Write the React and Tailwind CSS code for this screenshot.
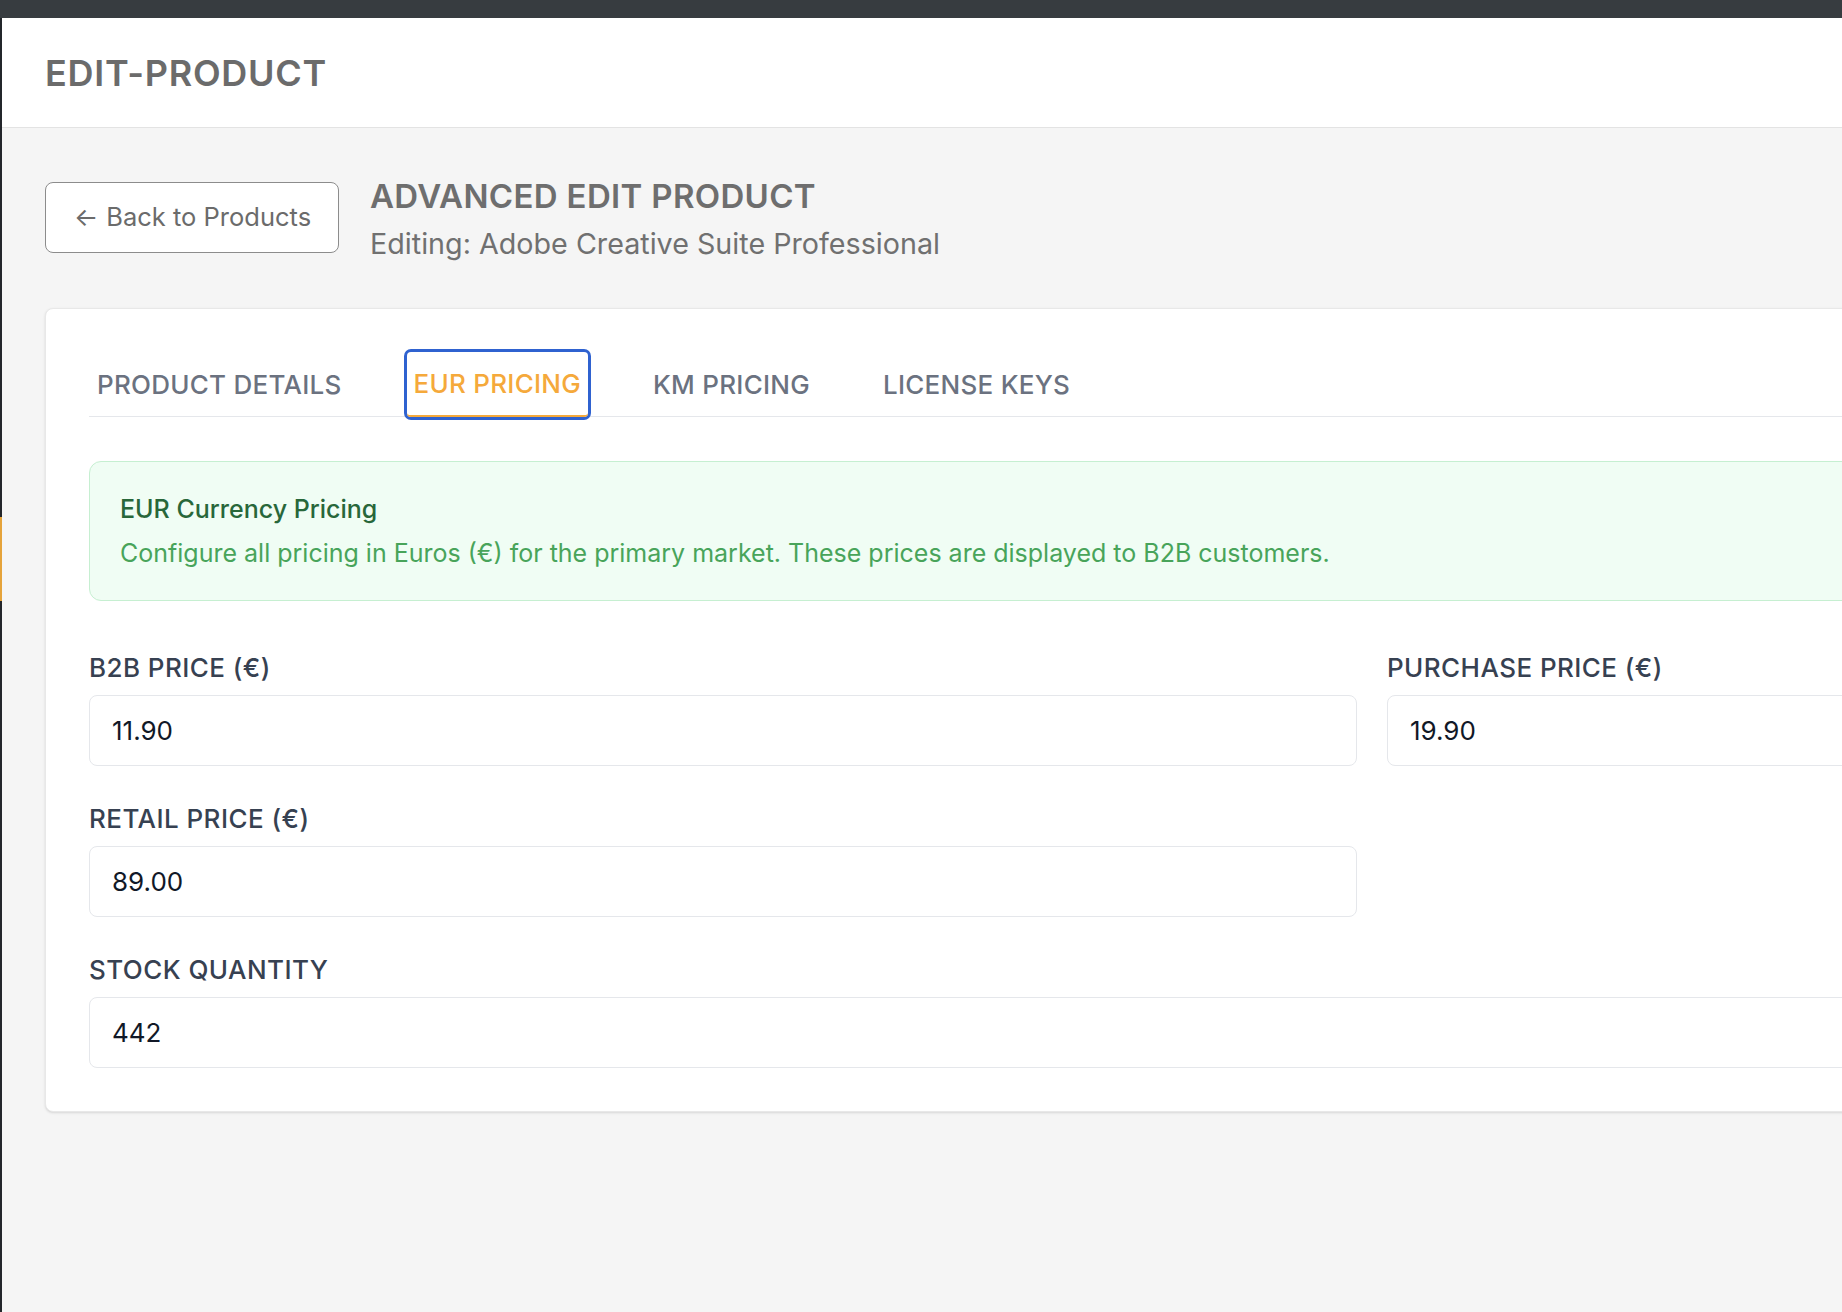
const tabs = ['PRODUCT DETAILS', 'EUR PRICING', 'KM PRICING', 'LICENSE KEYS'];

function Field({ label, value, className = '' }) {
  return (
    <div className={className}>
      <label className="block text-[26px] leading-[39px] font-medium tracking-[0.017em] text-[#374151]">{label}</label>
      <div className="mt-[8px] h-[71px] flex items-center px-[22px] border border-[#e5e7eb] rounded-[8px] bg-white text-[26px] text-[#111827]">
        {value}
      </div>
    </div>
  );
}

export default function App() {
  return (
    <div className="w-[1842px] h-[1312px] overflow-hidden bg-[#f5f5f5] font-['Inter',sans-serif]">
      <div className="h-[18px] bg-[#373c40]" />
      <div className="flex h-[1294px]">
        <div className="w-[2px] flex flex-col shrink-0">
          <div className="h-[499px] bg-[#23262b]" />
          <div className="h-[84px] bg-[#e5a33a]" />
          <div className="flex-1 bg-[#23262b]" />
        </div>
        <div className="w-[2400px] shrink-0">
          <header className="h-[110px] bg-white border-b border-[#e3e3e3] flex items-center pl-[43px]">
            <h1 className="text-[36px] font-semibold tracking-[0.02em] text-[#6b6b6b]">EDIT-PRODUCT</h1>
          </header>

          <main className="px-[43px] pt-[54px]">
            <div className="flex items-start gap-[31px]">
              <button className="w-[294px] h-[71px] flex items-center justify-center gap-[8px] pl-[1px] border border-[#8c8c8c] rounded-[8px] bg-white text-[25.5px] text-[#6b6b6b]">
                <span>←</span>
                <span>Back to Products</span>
              </button>
              <div className="-mt-[6px]">
                <h2 className="text-[33px] leading-[40px] font-semibold tracking-[0.01em] text-[#6e6e6e]">ADVANCED EDIT PRODUCT</h2>
                <p className="mt-[8px] text-[28.7px] leading-[40px] text-[#707070]">Editing: Adobe Creative Suite Professional</p>
              </div>
            </div>

            <section className="mt-[44px] w-[2200px] bg-white border border-[#e8e8e8] rounded-[8px] shadow-sm p-[43px]">
              <nav className="flex gap-[57px] border-b border-[#e5e7eb]">
                {tabs.map((t) =>
                  t === 'EUR PRICING' ? (
                    <button
                      key={t}
                      className="h-[65px] -mb-px px-[7px] flex items-center text-[26px] font-medium tracking-[0.01em] text-[#f5a93b] border-b-2 border-[#f5a93b] rounded-[4px] ring-[3px] ring-[#2f62d0]"
                    >
                      {t}
                    </button>
                  ) : (
                    <button key={t} className="h-[64px] px-[8px] flex items-center text-[26px] font-medium tracking-[0.01em] text-[#6b7280]">
                      {t}
                    </button>
                  )
                )}
              </nav>

              <div className="mt-[44px] border border-[#c6efd1] bg-[#f0fdf4] rounded-[12px] px-[30px] py-[29px]">
                <h3 className="text-[25px] leading-[36px] font-medium text-[#28673a]">EUR Currency Pricing</h3>
                <p className="mt-[8px] text-[25px] leading-[36px] text-[#48a45a]">
                  Configure all pricing in Euros (€) for the primary market. These prices are displayed to B2B customers.
                </p>
              </div>

              <div className="mt-[47px] grid grid-cols-[1268px_1fr] gap-x-[30px] gap-y-[33px]">
                <Field label="B2B PRICE (€)" value="11.90" />
                <Field label="PURCHASE PRICE (€)" value="19.90" />
                <Field label="RETAIL PRICE (€)" value="89.00" />
                <div />
                <Field label="STOCK QUANTITY" value="442" className="col-span-2" />
              </div>
            </section>
          </main>
        </div>
      </div>
    </div>
  );
}
